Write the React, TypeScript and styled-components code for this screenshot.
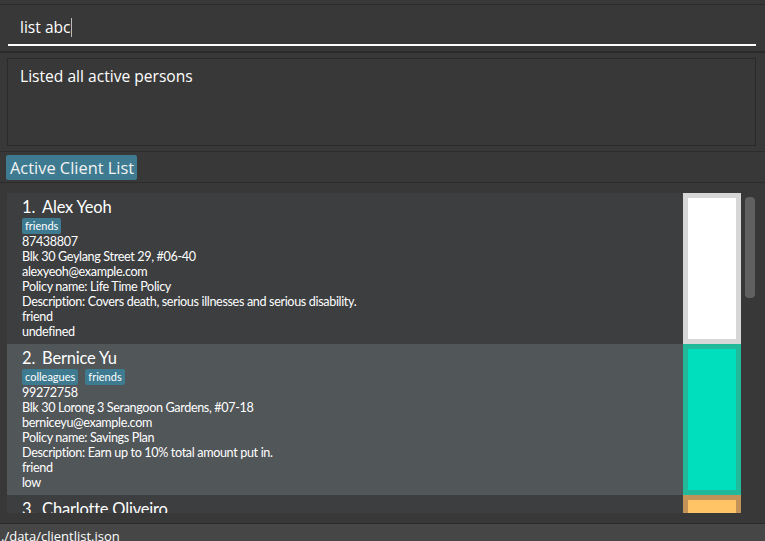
import React from "react";
import styled, { createGlobalStyle } from "styled-components";

const GlobalStyle = createGlobalStyle`
  html, body { margin: 0; padding: 0; background: #383838; }
  body { font-family: "Open Sans", "Liberation Sans", sans-serif; }
  * { box-sizing: border-box; }
`;

const Window = styled.div`
  width: 765px;
  height: 541px;
  background: #383838;
  display: flex;
  flex-direction: column;
  overflow: hidden;
  color: #ffffff;
`;

const TopStrip = styled.div`
  height: 5px;
  flex: none;
  border-bottom: 1px solid #2c2c2c;
`;

const CommandArea = styled.div`
  height: 48px;
  flex: none;
  padding: 0 9px 0 8px;
  display: flex;
  flex-direction: column;
  justify-content: flex-start;
  border-bottom: 2px solid #2b2b2b;
`;

const CommandInput = styled.div`
  height: 41px;
  border-bottom: 2px solid #ffffff;
  padding: 11px 0 0 12px;
  font-size: 15.6px;
  line-height: 22px;
  display: flex;
  align-items: flex-start;
`;

const Caret = styled.span`
  display: inline-block;
  width: 1px;
  height: 19px;
  margin-top: 2px;
  background: #bbbbbb;
`;

const ResultWrap = styled.div`
  flex: none;
  padding: 5px 9px 5px 7px;
  border-bottom: 1px solid #2c2c2c;
`;

const ResultBox = styled.div`
  height: 88px;
  border: 1px solid #2a2a2a;
  padding: 6px 12px;
  font-size: 15.6px;
  line-height: 22px;
`;

const LabelBar = styled.div`
  height: 31px;
  flex: none;
  padding: 3px 6px 0;
  border-bottom: 1px solid #2c2c2c;
`;

const ListLabel = styled.span`
  display: inline-block;
  background: #3e7b91;
  border-radius: 2px;
  height: 25px;
  padding: 0 3px 0 4px;
  font-size: 16.4px;
  line-height: 25px;
  color: #f2f2f2;
`;

const ListArea = styled.div`
  flex: 1;
  padding: 10px 9px 10px 7px;
  display: flex;
  gap: 3px;
  min-height: 0;
`;

const Cards = styled.div`
  flex: 1;
  overflow: hidden;
  display: flex;
  flex-direction: column;
`;

const CardRow = styled.div<{ $alt: boolean }>`
  flex: none;
  display: flex;
  height: 151px;
  background: ${(p) => (p.$alt ? "#515659" : "#3c3e40")};
`;

const CardBody = styled.div`
  flex: 1;
  padding: 4px 0 5px 15px;
  display: flex;
  flex-direction: column;
  font-family: Lato, "Open Sans", sans-serif;
`;

const Name = styled.div`
  font-size: 16.5px;
  line-height: 20px;
  height: 20px;
  color: #ffffff;
  display: flex;
  gap: 7px;
  letter-spacing: -0.2px;
`;

const Tags = styled.div`
  margin-top: 1px;
  height: 16px;
  display: flex;
  gap: 7px;
`;

const Tag = styled.span`
  background: #3e7b91;
  border-radius: 2px;
  padding: 0 3px;
  font-size: 11px;
  line-height: 16px;
  color: #ffffff;
`;

const Field = styled.div`
  font-size: 12.6px;
  line-height: 15px;
  height: 15px;
  color: #ffffff;
  white-space: nowrap;
  letter-spacing: -0.35px;
`;

const ColorBar = styled.div<{ $outer: string; $inner: string }>`
  width: 58px;
  flex: none;
  background: ${(p) => p.$inner};
  border: 5px solid ${(p) => p.$outer};
`;

const ScrollTrack = styled.div`
  width: 12px;
  flex: none;
  padding: 4px 1px 0 1px;
`;

const Thumb = styled.div`
  width: 10px;
  height: 101px;
  border-radius: 4px;
  background: #606060;
`;

const StatusBar = styled.div`
  height: 18px;
  flex: none;
  background: #464646;
  border-top: 1px solid #2b2b2b;
  padding: 3px 0 0 1px;
  font-size: 13px;
  line-height: 18px;
  color: #ffffff;
  white-space: nowrap;
`;

type Person = {
  name: string;
  tags: string[];
  lines: string[];
  outer: string;
  inner: string;
};

const people: Person[] = [
  {
    name: "Alex Yeoh",
    tags: ["friends"],
    lines: [
      "87438807",
      "Blk 30 Geylang Street 29, #06-40",
      "alexyeoh@example.com",
      "Policy name: Life Time Policy",
      "Description: Covers death, serious illnesses and serious disability.",
      "friend",
      "undefined",
    ],
    outer: "#d6d7d6",
    inner: "#ffffff",
  },
  {
    name: "Bernice Yu",
    tags: ["colleagues", "friends"],
    lines: [
      "99272758",
      "Blk 30 Lorong 3 Serangoon Gardens, #07-18",
      "berniceyu@example.com",
      "Policy name: Savings Plan",
      "Description: Earn up to 10% total amount put in.",
      "friend",
      "low",
    ],
    outer: "#22b89a",
    inner: "#00dfbd",
  },
  {
    name: "Charlotte Oliveiro",
    tags: ["neighbours"],
    lines: [
      "93210283",
      "Blk 11 Ang Mo Kio Street 74, #11-04",
      "charlotte@example.com",
      "Policy name: Health Plan",
      "Description: Covers hospital bills.",
      "friend",
      "medium",
    ],
    outer: "#c49358",
    inner: "#ffc466",
  },
];

export default function App() {
  return (
    <>
      <GlobalStyle />
      <Window>
        <TopStrip />
        <CommandArea>
          <CommandInput>
            list abc
            <Caret />
          </CommandInput>
        </CommandArea>
        <ResultWrap>
          <ResultBox>Listed all active persons</ResultBox>
        </ResultWrap>
        <LabelBar>
          <ListLabel>Active Client List</ListLabel>
        </LabelBar>
        <ListArea>
          <Cards>
            {people.map((p, i) => (
              <CardRow key={p.name} $alt={i % 2 === 1}>
                <CardBody>
                  <Name>
                    <span>{i + 1}.</span>
                    <span>{p.name}</span>
                  </Name>
                  <Tags>
                    {p.tags.map((t) => (
                      <Tag key={t}>{t}</Tag>
                    ))}
                  </Tags>
                  {p.lines.map((l, j) => (
                    <Field key={j}>{l}</Field>
                  ))}
                </CardBody>
                <ColorBar $outer={p.outer} $inner={p.inner} />
              </CardRow>
            ))}
          </Cards>
          <ScrollTrack>
            <Thumb />
          </ScrollTrack>
        </ListArea>
        <StatusBar>./data/clientlist.json</StatusBar>
      </Window>
    </>
  );
}
